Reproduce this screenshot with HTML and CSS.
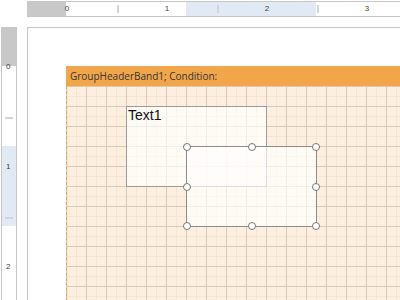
FILE: index.html
```html
<!DOCTYPE html>
<html lang="en">
<head>
    <meta charset="UTF-8">
    <title>Report designer</title>
    <link rel="stylesheet" href="styles.css">
</head>
<body>
<div class="designer">
    <div class="corner"></div>

    <div class="ruler-top">
        <div class="ruler-h">
            <div class="seg seg-margin"></div>
            <div class="seg seg-page"></div>
            <div class="seg seg-sel"></div>
            <div class="seg seg-rest"></div>
            <span class="mark-h num" style="left: 40px">0</span>
            <span class="mark-h tick" style="left: 90px"></span>
            <span class="mark-h num" style="left: 140px">1</span>
            <span class="mark-h tick" style="left: 190px"></span>
            <span class="mark-h num" style="left: 240px">2</span>
            <span class="mark-h tick" style="left: 290px"></span>
            <span class="mark-h num" style="left: 340px">3</span>
        </div>
    </div>

    <div class="ruler-left">
        <div class="ruler-v">
            <div class="vseg vseg-margin"></div>
            <div class="vseg vseg-page"></div>
            <div class="vseg vseg-sel"></div>
            <div class="vseg vseg-rest"></div>
            <span class="mark-v num" style="top: 40px">0</span>
            <span class="mark-v tick" style="top: 90px"></span>
            <span class="mark-v num" style="top: 140px">1</span>
            <span class="mark-v tick" style="top: 190px"></span>
            <span class="mark-v num" style="top: 240px">2</span>
        </div>
    </div>

    <div class="canvas">
        <div class="band">
            <div class="band-header">GroupHeaderBand1; Condition:</div>
            <div class="band-body">
                <div class="component text1">Text1</div>
                <div class="component selected">
                    <span class="handle" style="left: 0; top: 0"></span>
                    <span class="handle" style="left: 50%; top: 0"></span>
                    <span class="handle" style="left: 100%; top: 0"></span>
                    <span class="handle" style="left: 0; top: 50%"></span>
                    <span class="handle" style="left: 100%; top: 50%"></span>
                    <span class="handle" style="left: 0; top: 100%"></span>
                    <span class="handle" style="left: 50%; top: 100%"></span>
                    <span class="handle" style="left: 100%; top: 100%"></span>
                </div>
            </div>
        </div>
    </div>
</div>
</body>
</html>
```

FILE: styles.css
```css
body {
    margin: 0;
    background: #ffffff;
    font-family: "Liberation Sans", Arial, sans-serif;
}

.designer {
    width: 400px;
    height: 300px;
    overflow: hidden;
    display: grid;
    grid-template-columns: 27px 373px;
    grid-template-rows: 27px 273px;
}

/* rulers */

.ruler-top {
    padding-top: 1px;
}

.ruler-h {
    position: relative;
    height: 14px;
    border-top: 1px solid #c6c6c6;
    border-bottom: 1px solid #c6c6c6;
    display: flex;
}

.seg-margin {
    width: 39px;
    background: #c8c8c8;
}

.seg-page {
    width: 120px;
}

.seg-sel {
    width: 130px;
    background: #e1e9f5;
}

.seg-rest {
    flex: 1;
}

.ruler-left {
    padding-left: 1px;
}

.ruler-v {
    position: relative;
    width: 14px;
    height: 100%;
    border-left: 1px solid #c6c6c6;
    border-right: 1px solid #c6c6c6;
    display: flex;
    flex-direction: column;
}

.vseg-margin {
    height: 39px;
    background: #c8c8c8;
}

.vseg-page {
    height: 80px;
}

.vseg-sel {
    height: 80px;
    background: #e1e9f5;
}

.vseg-rest {
    flex: 1;
}

.num {
    position: absolute;
    font-size: 8px;
    line-height: 8px;
    color: #3c3c3c;
}

.mark-h.num {
    top: 3px;
    transform: translateX(-50%);
}

.mark-v.num {
    left: 4px;
    transform: translateY(-50%);
}

.tick {
    position: absolute;
    background: #d4d4d4;
}

.mark-h.tick {
    top: 3px;
    width: 2px;
    height: 8px;
}

.mark-v.tick {
    left: 3px;
    width: 8px;
    height: 2px;
}

/* page */

.canvas {
    border-top: 1px solid #c6c6c6;
    border-left: 1px solid #c6c6c6;
    padding: 38px 0 0 38px;
    overflow: hidden;
}

.band {
    width: 340px;
}

.band-header {
    height: 20px;
    background: #f1a64c;
    color: #353535;
    font-family: "Open Sans", sans-serif;
    font-size: 10px;
    line-height: 21px;
    padding-left: 4px;
    white-space: nowrap;
}

.band-body {
    position: relative;
    height: 220px;
    border-left: 1px dashed #f0a040;
    background-color: #fcefdf;
    background-origin: border-box;
    background-image:
        linear-gradient(to right, #dcc9b5 1px, transparent 1px),
        linear-gradient(to bottom, #dcc9b5 1px, transparent 1px),
        linear-gradient(to right, #f5e5d3 1px, transparent 1px),
        linear-gradient(to bottom, #f5e5d3 1px, transparent 1px);
    background-size: 20px 20px, 20px 20px, 10px 10px, 10px 10px;
}

.component {
    position: absolute;
    box-sizing: border-box;
    background: rgba(255, 255, 255, 0.65);
    border: 1px solid #9c9c9c;
}

.text1 {
    left: 59px;
    top: 20px;
    width: 141px;
    height: 81px;
    font-size: 14px;
    line-height: 16px;
    padding-left: 1px;
    color: #111111;
}

.selected {
    left: 119px;
    top: 60px;
    width: 131px;
    height: 81px;
    border-color: #8c8c8c;
}

.handle {
    position: absolute;
    box-sizing: border-box;
    width: 8px;
    height: 8px;
    margin: -4px 0 0 -4px;
    border: 1px solid #767676;
    border-radius: 50%;
    background: #ffffff;
}
```
